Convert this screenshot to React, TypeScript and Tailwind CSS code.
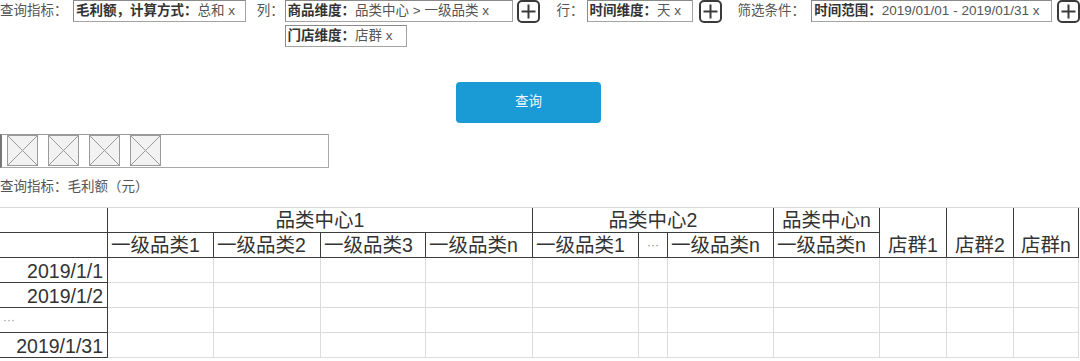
import React from "react";

const FONT = '"Liberation Sans","Noto Sans CJK SC",sans-serif';

function Plus() {
  return (
    <svg width="23" height="23" viewBox="0 0 23 23" className="shrink-0">
      <rect x="1" y="1" width="21" height="21" rx="4" fill="white" stroke="#3a3a3a" strokeWidth="2" />
      <line x1="4.5" y1="11.5" x2="18.5" y2="11.5" stroke="#3a3a3a" strokeWidth="2" />
      <line x1="11.5" y1="4.5" x2="11.5" y2="18.5" stroke="#3a3a3a" strokeWidth="2" />
    </svg>
  );
}

function Tag({ bold, rest, w }: { bold: string; rest: string; w: string }) {
  return (
    <div className={`${w} h-[22px] border border-[#a3a3a3] border-t-[#8a8a8a] border-l-[#8a8a8a] flex items-center pl-[2px] whitespace-nowrap bg-white overflow-hidden`}>
      <span className="font-bold text-[#333]">{bold}</span>
      <span className="text-[#555]">{rest}</span>
    </div>
  );
}

function ImgPh() {
  return (
    <svg width="31" height="31" viewBox="0 0 31 31" className="shrink-0">
      <rect x="0.5" y="0.5" width="30" height="30" fill="#f2f2f2" stroke="#9a9a9a" />
      <line x1="0.5" y1="0.5" x2="30.5" y2="30.5" stroke="#9a9a9a" />
      <line x1="30.5" y1="0.5" x2="0.5" y2="30.5" stroke="#9a9a9a" />
    </svg>
  );
}

const DARK = "border-[#3c3c3c]";

export default function App() {
  const cols = "108px 106px 107px 105px 107px 106px 29px 106px 106px 67px 67px 65px";
  const bodyRows = ["2019/1/1", "2019/1/2", "···", "2019/1/31"];
  const hdrCell = `border-r border-b ${DARK} text-[#333] text-[19.5px] leading-none flex items-end pb-[2px] whitespace-nowrap overflow-hidden`;
  return (
    <div className="w-[1080px] h-[361px] bg-white overflow-hidden" style={{ fontFamily: FONT }}>
      {/* toolbar */}
      <div className="flex items-start text-[13.5px] text-[#555] h-[47px]">
        <div className="h-[23px] flex items-center w-[73px]">查询指标：</div>
        <Tag w="w-[173px]" bold="毛利额，计算方式：" rest="总和 x" />
        <div className="h-[23px] flex items-center ml-[11px] w-[28px]">列：</div>
        <div className="flex flex-col gap-[3px]">
          <Tag w="w-[228px]" bold="商品维度：" rest="品类中心 > 一级品类 x" />
          <Tag w="w-[122px]" bold="门店维度：" rest="店群 x" />
        </div>
        <div className="ml-[4px]"><Plus /></div>
        <div className="h-[23px] flex items-center ml-[17px] w-[30px]">行：</div>
        <Tag w="w-[107px]" bold="时间维度：" rest="天 x" />
        <div className="ml-[6px]"><Plus /></div>
        <div className="h-[23px] flex items-center ml-[15px] w-[74px]">筛选条件：</div>
        <Tag w="w-[241px]" bold="时间范围：" rest="2019/01/01 - 2019/01/31 x" />
        <div className="ml-[5px]"><Plus /></div>
      </div>

      {/* button */}
      <div className="mt-[35px] ml-[456px] w-[145px] h-[41px] rounded-[4px] bg-[#1a9bd6] flex items-center justify-center text-[13.5px] text-[#eef7fc]">
        查询
      </div>

      {/* image strip */}
      <div className="mt-[11px] w-[329px] h-[34px] border border-[#a8a8a8] border-t-[#9a9a9a] border-l-[#777] border-l-2 flex items-start gap-[10px] pl-[5px]">
        <ImgPh />
        <ImgPh />
        <ImgPh />
        <ImgPh />
      </div>

      <div className="mt-[10px] h-[18px] leading-[18px] text-[13.5px] text-[#555]">查询指标：毛利额（元）</div>

      {/* table */}
      <div
        className="mt-[11px] grid border-t border-[#d9d9d9]"
        style={{ gridTemplateColumns: cols, gridAutoRows: "25px" }}
      >
        {/* header row 1 */}
        <div className={`border-r border-b ${DARK}`} style={{ gridColumn: "1", gridRow: "1" }} />
        <div className={`${hdrCell} justify-center`} style={{ gridColumn: "2 / 6", gridRow: "1" }}>品类中心1</div>
        <div className={`${hdrCell} justify-center`} style={{ gridColumn: "6 / 9", gridRow: "1" }}>品类中心2</div>
        <div className={`${hdrCell} justify-center`} style={{ gridColumn: "9", gridRow: "1" }}>品类中心n</div>
        <div className={`${hdrCell} justify-center`} style={{ gridColumn: "10", gridRow: "1 / 3" }}>店群1</div>
        <div className={`${hdrCell} justify-center`} style={{ gridColumn: "11", gridRow: "1 / 3" }}>店群2</div>
        <div className={`${hdrCell} justify-center`} style={{ gridColumn: "12", gridRow: "1 / 3" }}>店群n</div>
        {/* header row 2 */}
        <div className={`border-r border-b ${DARK}`} style={{ gridColumn: "1", gridRow: "2" }} />
        {["一级品类1", "一级品类2", "一级品类3", "一级品类n", "一级品类1"].map((t, i) => (
          <div key={i} className={`${hdrCell} pl-[3px]`} style={{ gridColumn: `${i + 2}`, gridRow: "2" }}>{t}</div>
        ))}
        <div className={`border-r border-b ${DARK} flex items-center justify-center text-[12px] leading-[14px] text-[#888]`} style={{ gridColumn: "7", gridRow: "2" }}>···</div>
        <div className={`${hdrCell} pl-[3px]`} style={{ gridColumn: "8", gridRow: "2" }}>一级品类n</div>
        <div className={`${hdrCell} pl-[3px]`} style={{ gridColumn: "9", gridRow: "2" }}>一级品类n</div>
        {/* body */}
        {bodyRows.map((d, r) => (
          <React.Fragment key={r}>
            {d === "···" ? (
              <div className={`border-r border-b ${DARK} text-[12px] text-[#999] flex items-center pl-[3px]`}>···</div>
            ) : (
              <div className={`border-r border-b ${DARK} text-[19.5px] leading-none text-[#333] flex items-end justify-end pr-[4px] pb-[1px]`}>{d}</div>
            )}
            {Array.from({ length: 11 }).map((_, c) => (
              <div key={c} className="border-r border-b border-[#dcdcdc]" />
            ))}
          </React.Fragment>
        ))}
      </div>
    </div>
  );
}
